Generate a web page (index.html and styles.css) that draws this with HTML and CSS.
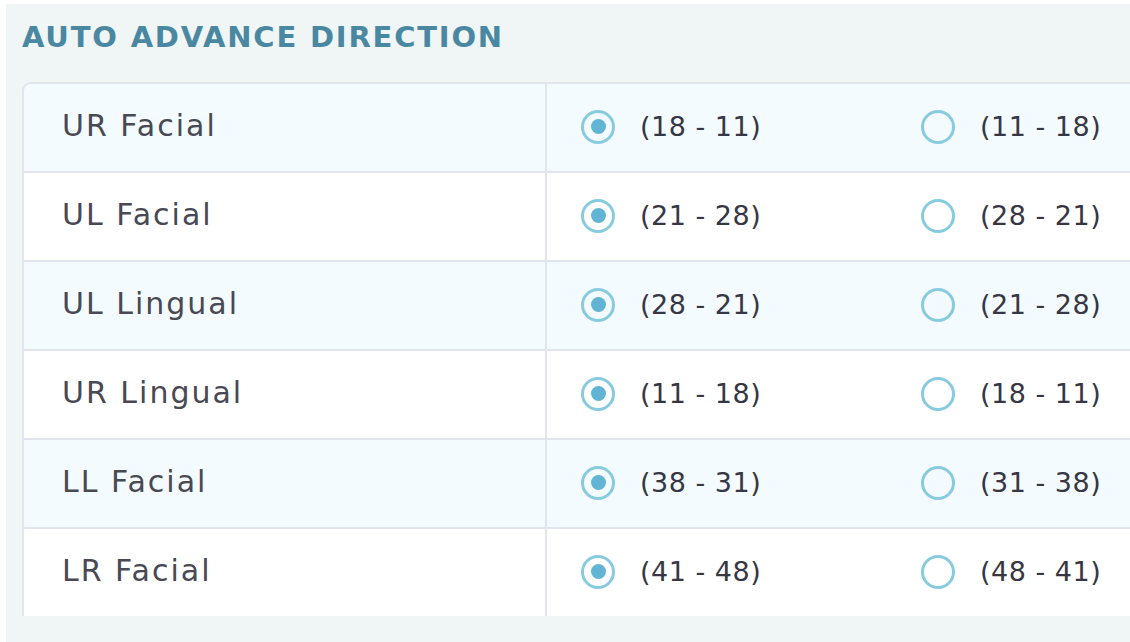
FILE: index.html
```html
<!DOCTYPE html>
<html lang="en">
<head>
    <meta charset="UTF-8">
    <title>Auto advance direction</title>
<link rel="stylesheet" href="styles.css">
</head>
<body>
    <div class="panel">
        <h2 class="panel-title">AUTO ADVANCE DIRECTION</h2>
        <div class="dir-table">
            <div class="dir-row">
                <div class="dir-name">UR Facial</div>
                <div class="dir-options">
                    <label class="opt"><span class="radio checked"></span>(18 - 11)</label>
                    <label class="opt"><span class="radio"></span>(11 - 18)</label>
                </div>
            </div>
            <div class="dir-row">
                <div class="dir-name">UL Facial</div>
                <div class="dir-options">
                    <label class="opt"><span class="radio checked"></span>(21 - 28)</label>
                    <label class="opt"><span class="radio"></span>(28 - 21)</label>
                </div>
            </div>
            <div class="dir-row">
                <div class="dir-name">UL Lingual</div>
                <div class="dir-options">
                    <label class="opt"><span class="radio checked"></span>(28 - 21)</label>
                    <label class="opt"><span class="radio"></span>(21 - 28)</label>
                </div>
            </div>
            <div class="dir-row">
                <div class="dir-name">UR Lingual</div>
                <div class="dir-options">
                    <label class="opt"><span class="radio checked"></span>(11 - 18)</label>
                    <label class="opt"><span class="radio"></span>(18 - 11)</label>
                </div>
            </div>
            <div class="dir-row">
                <div class="dir-name">LL Facial</div>
                <div class="dir-options">
                    <label class="opt"><span class="radio checked"></span>(38 - 31)</label>
                    <label class="opt"><span class="radio"></span>(31 - 38)</label>
                </div>
            </div>
            <div class="dir-row">
                <div class="dir-name">LR Facial</div>
                <div class="dir-options">
                    <label class="opt"><span class="radio checked"></span>(41 - 48)</label>
                    <label class="opt"><span class="radio"></span>(48 - 41)</label>
                </div>
            </div>
        </div>
    </div>
</body>
</html>
```

FILE: styles.css
```css
* {
    box-sizing: border-box;
}

body {
    margin: 0;
    background-color: #fff;
    font-family: "DejaVu Sans", sans-serif;
    overflow: hidden;
    height: 642px;
}

.panel {
    margin: 4px 0 0 6px;
    padding: 14px 0 40px 16px;
    background-color: #f0f5f5;
    height: 638px;
    overflow: hidden;
}

.panel-title {
    margin: 0 0 26px 0;
    font-size: 29px;
    line-height: 38px;
    font-weight: bold;
    color: #4a88a2;
    letter-spacing: 1.8px;
}

.dir-table {
    width: 1200px;
    border-left: 2px solid #e3e5ee;
    border-top: 2px solid #e3e5ee;
    border-top-left-radius: 9px;
    overflow: hidden;
}

.dir-row {
    display: flex;
    height: 89px;
    background-color: #fff;
    border-bottom: 2px solid #e3e5ee;
}

.dir-row:nth-child(odd) {
    background-color: #f3fbfe;
}

.dir-row:last-child {
    border-bottom: none;
    height: 87px;
}

.dir-name {
    flex-shrink: 0;
    width: 523px;
    padding: 0 0 4px 38px;
    display: flex;
    align-items: center;
    border-right: 2px solid #e3e5ee;
    font-size: 30px;
    letter-spacing: 2px;
    color: #484953;
}

.dir-options {
    flex-shrink: 0;
    display: flex;
    align-items: center;
    padding: 0 0 2px 34px;
}

.opt {
    flex-shrink: 0;
    width: 340px;
    display: flex;
    align-items: center;
    gap: 25px;
    font-size: 27px;
    letter-spacing: 0.5px;
    color: #363743;
}

.radio {
    flex-shrink: 0;
    width: 34px;
    height: 34px;
    border-radius: 50%;
    border: 3px solid #88cbdf;
    display: flex;
    align-items: center;
    justify-content: center;
}

.radio.checked::after {
    content: "";
    width: 15px;
    height: 15px;
    border-radius: 50%;
    background-color: #62b4d4;
}
```
